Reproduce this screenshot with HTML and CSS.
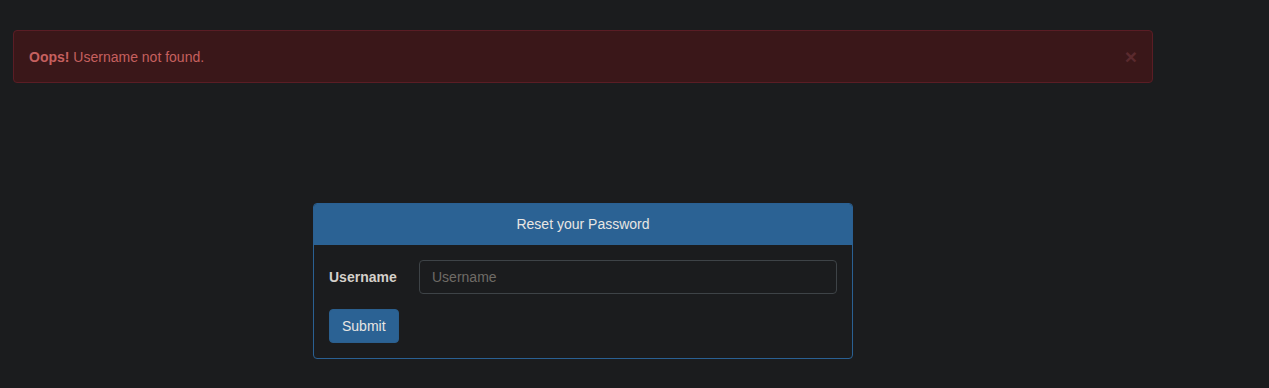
FILE: index.html
```html
<!DOCTYPE html>
<html>
<head>
    <title>Reset your Password</title>
    <link rel="stylesheet" href="styles.css">
</head>
<body>
    <div class="alert">
        <span><strong>Oops!</strong> Username not found.</span>
        <button class="close" type="button">&times;</button>
    </div>

    <div class="panel">
        <div class="panel-heading">Reset your Password</div>
        <div class="panel-body">
            <form class="reset-form">
                <div class="form-group">
                    <label for="username">Username</label>
                    <input type="text" id="username" placeholder="Username">
                </div>
                <button class="btn-submit" type="submit">Submit</button>
            </form>
        </div>
    </div>
</body>
</html>
```

FILE: styles.css
```css
body {
    margin: 0;
    padding: 30px 0 0 13px;
    background-color: #1b1c1e;
    font-family: "Liberation Sans", Arial, sans-serif;
    font-size: 14px;
    line-height: 20px;
    color: #d8d4cf;
}

.alert {
    width: 1140px;
    box-sizing: border-box;
    display: flex;
    justify-content: space-between;
    align-items: center;
    padding: 15px;
    background-color: #3a1719;
    border: 1px solid #5a1d25;
    border-radius: 4px;
    color: #c6605f;
}

.close {
    background: none;
    border: none;
    padding: 0;
    margin-right: 0;
    font-family: "Liberation Sans", Arial, sans-serif;
    font-size: 21px;
    font-weight: bold;
    line-height: 1;
    color: #5a2a2e;
    cursor: pointer;
}

.panel {
    width: 540px;
    box-sizing: border-box;
    margin: 120px 0 0 300px;
    border: 1px solid #2a6093;
    border-radius: 4px;
    background-color: #1b1c1e;
    overflow: hidden;
}

.panel-heading {
    background-color: #2b6294;
    border-bottom: 1px solid #2b6294;
    color: #e8e6e3;
    text-align: center;
    padding: 10px 15px;
}

.panel-body {
    padding: 15px;
}

.form-group {
    display: flex;
    align-items: center;
    margin-bottom: 15px;
}

label {
    width: 90px;
    flex-shrink: 0;
    font-weight: bold;
    color: #d4d0ca;
}

input {
    flex: 1;
    height: 34px;
    box-sizing: border-box;
    padding: 6px 12px;
    background-color: #1b1c1e;
    border: 1px solid #3e4347;
    border-radius: 4px;
    font-family: inherit;
    font-size: 14px;
    color: #d8d4cf;
}

input::placeholder {
    color: #6f6b66;
}

input:focus {
    outline: none;
    border-color: #2b6294;
}

.btn-submit {
    height: 34px;
    padding: 6px 12px;
    background-color: #2b6294;
    border: 1px solid #2b5f8e;
    border-radius: 4px;
    font-family: inherit;
    font-size: 14px;
    color: #e8e6e3;
    cursor: pointer;
}
```
